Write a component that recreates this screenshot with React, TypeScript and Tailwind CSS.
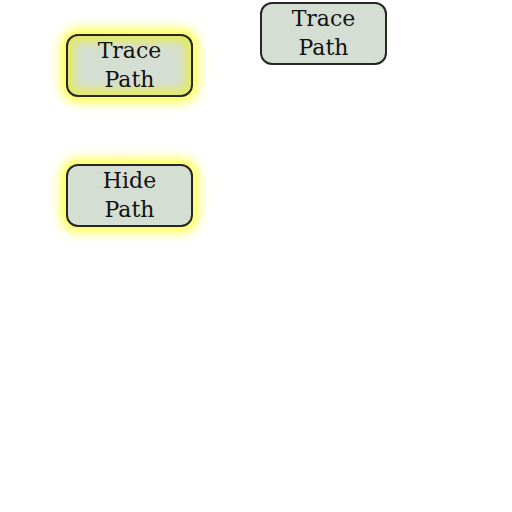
import React from 'react';

function PathButton({
  label,
  glow,
  active,
}: {
  label: [string, string];
  glow?: boolean;
  active?: boolean;
}) {
  const shadow = active
    ? 'shadow-[0_0_12px_5px_rgba(255,255,0,0.75),inset_0_0_10px_6px_rgba(230,236,90,0.95)]'
    : glow
      ? 'shadow-[0_0_12px_5px_rgba(255,255,0,0.75)]'
      : '';
  return (
    <button
      className={`w-[127px] h-[63px] rounded-[12px] border-2 border-[#262626] bg-[#d5ded3] text-[#111] text-[22px] leading-[29px] pb-[2px] flex flex-col items-center justify-center ${shadow}`}
      style={{ fontFamily: '"DejaVu Serif", "Liberation Serif", serif' }}
    >
      <span>{label[0]}</span>
      <span>{label[1]}</span>
    </button>
  );
}

export default function App() {
  return (
    <div className="w-[512px] h-[512px] bg-white flex gap-[67px]">
      <div className="pl-[66px] pt-[34px] flex flex-col gap-[67px]">
        <PathButton label={['Trace', 'Path']} glow active />
        <PathButton label={['Hide', 'Path']} glow />
      </div>
      <div className="pt-[2px]">
        <PathButton label={['Trace', 'Path']} />
      </div>
    </div>
  );
}
